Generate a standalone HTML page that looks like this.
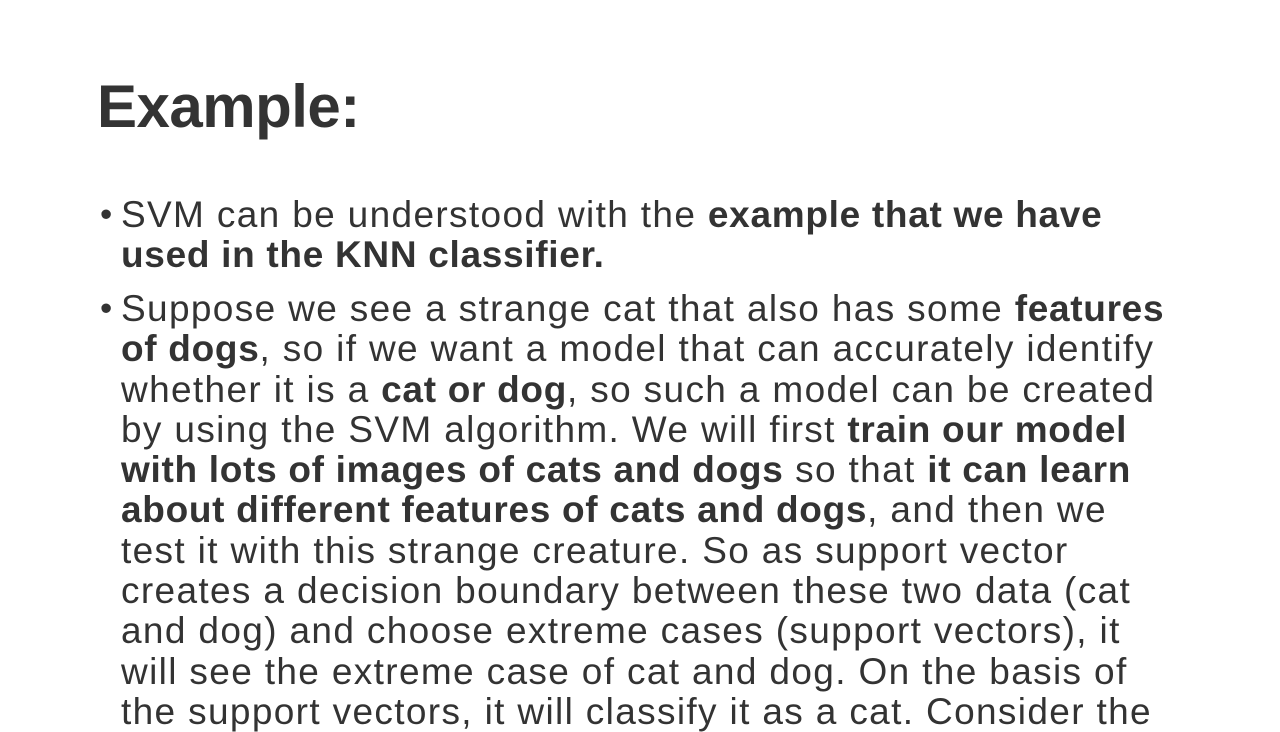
<!DOCTYPE html>
<html><head><meta charset="utf-8"><style>
html,body{margin:0;padding:0;background:#fff;width:1280px;height:720px;overflow:hidden}
body{font-family:"Liberation Sans",Arial,sans-serif;color:#333}
h1{position:absolute;left:97px;top:72px;margin:0;font-size:60px;font-weight:bold;letter-spacing:-0.5px;line-height:70px}
.b{position:absolute;left:100px;font-size:37px;line-height:40.3px}
.b .dot{position:absolute;left:0;top:0;font-size:35px}
.b .t{position:absolute;left:21px;white-space:nowrap;letter-spacing:1.35px}
.b .t div{white-space:nowrap}
b{font-weight:bold;letter-spacing:0.7px}
</style></head><body>
<h1>Example:</h1>
<div class="b" style="top:195px"><span class="dot">•</span><div class="t">
<div>SVM can be understood with the <b>example that we have</b></div>
<div><b>used in the KNN classifier.</b></div>
</div></div>
<div class="b" style="top:289px"><span class="dot">•</span><div class="t">
<div>Suppose we see a strange cat that also has some <b>features</b></div>
<div><b>of dogs</b>, so if we want a model that can accurately identify</div>
<div>whether it is a <b>cat or dog</b>, so such a model can be created</div>
<div>by using the SVM algorithm. We will first <b>train our model</b></div>
<div><b>with lots of images of cats and dogs</b> so that <b>it can learn</b></div>
<div><b>about different features of cats and dogs</b>, and then we</div>
<div>test it with this strange creature. So as support vector</div>
<div>creates a decision boundary between these two data (cat</div>
<div>and dog) and choose extreme cases (support vectors), it</div>
<div>will see the extreme case of cat and dog. On the basis of</div>
<div>the support vectors, it will classify it as a cat. Consider the</div>
</div></div>
</body></html>
